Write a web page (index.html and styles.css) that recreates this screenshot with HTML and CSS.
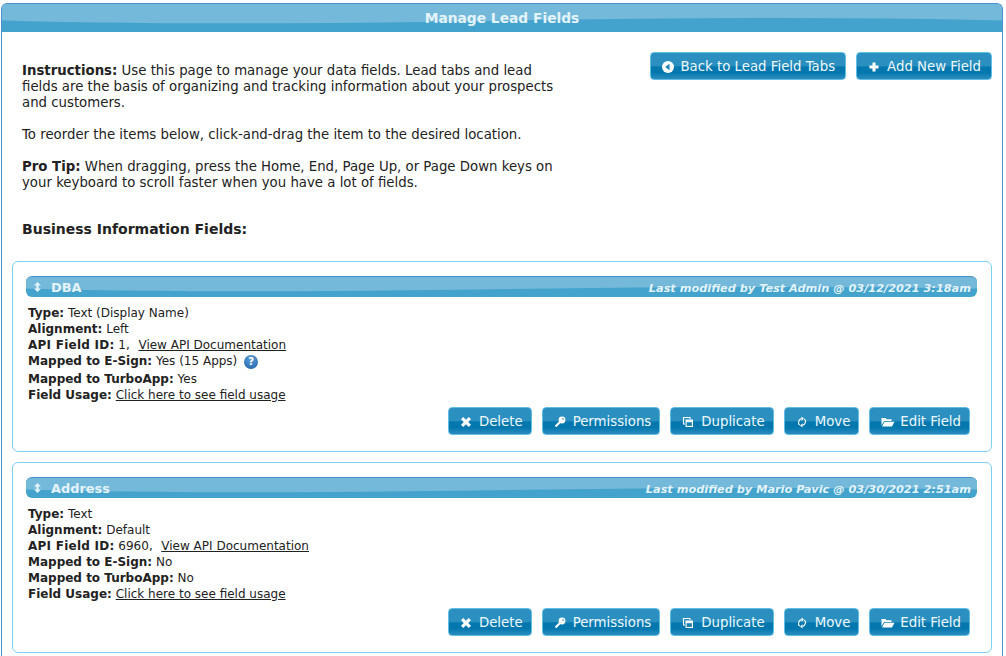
FILE: index.html
```html
<!DOCTYPE html>
<html lang="en">
<head>
<meta charset="utf-8">
<title>Manage Lead Fields</title>
<link rel="stylesheet" href="styles.css">
</head>
<body>
<svg class="defs" width="0" height="0" aria-hidden="true">
  <defs>
    <symbol id="i-x" viewBox="0 0 12 12"><path d="M1 3.200 3.200 1 6 3.800 8.800 1 11 3.200 8.200 6 11 8.800 8.800 11 6 8.200 3.200 11 1 8.800 3.800 6Z" fill="#fff"/></symbol>
    <symbol id="i-key" viewBox="0 0 12 12"><circle cx="8" cy="4" r="3.400" fill="#fff"/><path d="M6 6 1.500 10.500" stroke="#fff" stroke-width="2.200" fill="none"/><circle cx="9" cy="3" r=".8" fill="#1a80b4"/></symbol>
    <symbol id="i-dup" viewBox="0 0 12 12"><path d="M3 8H1.500V1.500H8V3" stroke="#fff" stroke-width="1.100" fill="none"/><path d="M3.500 3.500H11V11H3.500Z" fill="#fff"/><path d="M4.600 6.200h5.300v3.700H4.600Z" fill="#1a80b4"/></symbol>
    <symbol id="i-move" viewBox="0 0 12 12"><path d="M3.600 9.200A4 4 0 0 1 5.500 2.600M8.400 2.800A4 4 0 0 1 6.500 9.400" stroke="#fff" stroke-width="1.100" fill="none"/><path d="M5.500.4 8 2.600 5.500 4.800ZM6.500 7.200 4 9.400l2.500 2.200Z" fill="#fff"/></symbol>
    <symbol id="i-open" viewBox="0 1 14 10"><path d="M.5 2h4l1 1.200h5V5H3L.5 9.500Z" fill="#fff"/><path d="M3.500 5.800h10L11 10.500H1Z" fill="#fff"/></symbol>
    <symbol id="i-back" viewBox="0 0 12 12"><circle cx="6" cy="6" r="6" fill="#fff"/><path d="M7.500 2.800v6.400L3.200 6Z" fill="#1a80b4"/></symbol>
    <symbol id="i-plus" viewBox="0 0 12 12"><path d="M4.500 1.500h3v3h3v3h-3v3h-3v-3h-3v-3h3Z" fill="#fff"/></symbol>
    <symbol id="i-sort" viewBox="0 0 7 10"><path d="M3.500 0 7 3.500H4.600v3H7L3.500 10 0 6.500h2.400v-3H0Z" fill="#e3f3fa"/></symbol>
  </defs>
</svg>
<main class="frame">
  <header class="bar bar-main">
    <svg class="wave" viewBox="0 0 1000 29" preserveAspectRatio="none" aria-hidden="true"><path d="M0 17C100 20 250 21 400 19C600 15 800 12 1000 17V0H0Z" fill="#74b9d9"/></svg>
    <h1 class="bar-title">Manage Lead Fields</h1>
  </header>
  <section class="intro">
    <div class="intro-text">
      <p><b>Instructions:</b> Use this page to manage your data fields. Lead tabs and lead fields are the basis of organizing and tracking information about your prospects and customers.</p>
      <p>To reorder the items below, click-and-drag the item to the desired location.</p>
      <p><b>Pro Tip:</b> When dragging, press the Home, End, Page Up, or Page Down keys on your keyboard to scroll faster when you have a lot of fields.</p>
    </div>
    <div class="intro-actions">
      <a class="btn"><svg class="ic"><use href="#i-back"/></svg>Back to Lead Field Tabs</a>
      <a class="btn"><svg class="ic"><use href="#i-plus"/></svg>Add New Field</a>
    </div>
  </section>
  <h2 class="section-title">Business Information Fields:</h2>

  <article class="card">
    <div class="bar bar-card">
      <svg class="wave" viewBox="0 0 1000 21" preserveAspectRatio="none" aria-hidden="true"><path d="M0 12C100 15 250 16 400 14C600 11 800 9 1000 12V0H0Z" fill="#74b9d9"/></svg>
      <span class="card-name"><svg class="sort"><use href="#i-sort"/></svg>DBA</span>
      <span class="card-meta">Last modified by Test Admin @ 03/12/2021 3:18am</span>
    </div>
    <div class="props">
      <div><b>Type:</b> Text (Display Name)</div>
      <div><b>Alignment:</b> Left</div>
      <div class="prop-api"><b>API Field ID:</b> 1,&nbsp; <a href="#">View API Documentation</a></div>
      <div class="prop-help"><b>Mapped to E-Sign:</b> Yes (15 Apps) <span class="help">?</span></div>
      <div><b>Mapped to TurboApp:</b> Yes</div>
      <div><b>Field Usage:</b> <a href="#">Click here to see field usage</a></div>
    </div>
    <div class="actions">
      <a class="btn"><svg class="ic"><use href="#i-x"/></svg>Delete</a>
      <a class="btn"><svg class="ic"><use href="#i-key"/></svg>Permissions</a>
      <a class="btn"><svg class="ic"><use href="#i-dup"/></svg>Duplicate</a>
      <a class="btn"><svg class="ic"><use href="#i-move"/></svg>Move</a>
      <a class="btn"><svg class="ic ic-wide"><use href="#i-open"/></svg>Edit Field</a>
    </div>
  </article>

  <article class="card">
    <div class="bar bar-card">
      <svg class="wave" viewBox="0 0 1000 21" preserveAspectRatio="none" aria-hidden="true"><path d="M0 12C100 15 250 16 400 14C600 11 800 9 1000 12V0H0Z" fill="#74b9d9"/></svg>
      <span class="card-name"><svg class="sort"><use href="#i-sort"/></svg>Address</span>
      <span class="card-meta">Last modified by Mario Pavic @ 03/30/2021 2:51am</span>
    </div>
    <div class="props">
      <div><b>Type:</b> Text</div>
      <div><b>Alignment:</b> Default</div>
      <div class="prop-api"><b>API Field ID:</b> 6960,&nbsp; <a href="#">View API Documentation</a></div>
      <div><b>Mapped to E-Sign:</b> No</div>
      <div><b>Mapped to TurboApp:</b> No</div>
      <div><b>Field Usage:</b> <a href="#">Click here to see field usage</a></div>
    </div>
    <div class="actions">
      <a class="btn"><svg class="ic"><use href="#i-x"/></svg>Delete</a>
      <a class="btn"><svg class="ic"><use href="#i-key"/></svg>Permissions</a>
      <a class="btn"><svg class="ic"><use href="#i-dup"/></svg>Duplicate</a>
      <a class="btn"><svg class="ic"><use href="#i-move"/></svg>Move</a>
      <a class="btn"><svg class="ic ic-wide"><use href="#i-open"/></svg>Edit Field</a>
    </div>
  </article>
</main>
</body>
</html>
```
FILE: styles.css
```css
* { box-sizing: border-box; }
html, body { margin: 0; height: 656px; overflow: hidden; }
body {
  background: #fff;
  color: #222;
  font-family: "DejaVu Sans", Verdana, sans-serif;
  font-size: 12px;
  line-height: 16px;
  padding: 3px 3px 0 1px;
}
.defs { display: block; height: 0; }
.frame {
  height: 653px;
  overflow: hidden;
  border: 1px solid #4a90cf;
  border-bottom: 0;
  border-radius: 6px 6px 0 0;
  padding: 0 10px;
}
.bar {
  position: relative;
  display: flex;
  align-items: center;
  background: #43a3cd;
  overflow: hidden;
  color: #fff;
}
.wave { position: absolute; inset: 0; width: 100%; height: 100%; }
.bar-main {
  height: 28px;
  margin: 0 -10px;
  justify-content: center;
  border-radius: 5px 5px 0 0;
}
.bar-title {
  position: relative;
  margin: 0;
  font-size: 13.800px;
  font-weight: bold;
  color: #e3f3fa;
}
.intro {
  display: flex;
  justify-content: space-between;
  padding: 20px 0 0 10px;
  font-size: 13.300px;
}
.intro-text { width: 540px; padding-top: 11px; }
.intro-text p { margin: 0 0 16px; }
.intro-actions { display: flex; gap: 10px; align-items: flex-start; }
.intro-actions .btn { padding-right: 10px; }
.section-title {
  margin: 13px 0 23px 10px;
  font-size: 14px;
  line-height: 18px;
  font-weight: bold;
}
.btn {
  display: inline-flex;
  align-items: center;
  height: 28px;
  padding: 1px 8px 0 11px;
  border: 1px solid #62bde6;
  border-radius: 4px;
  background: linear-gradient(#2b90c0 0, #2b90c0 48%, #0478ae 54%, #0478ae 75%, #2b8cbc 100%);
  color: #eef8fc;
  font-size: 13.300px;
  line-height: 18px;
  white-space: nowrap;
  cursor: pointer;
}
.ic { width: 12px; height: 12px; margin-right: 7px; flex: none; }
.ic-wide { width: 14px; margin-right: 5px; }
.card {
  display: flex;
  flex-direction: column;
  height: 191px;
  margin: 0 0 10px;
  padding: 14px 14px 16px 13px;
  border: 1px solid #7ed1f3;
  border-radius: 6px;
}
.bar-card {
  height: 21px;
  flex: none;
  justify-content: space-between;
  padding: 1px 6px 0 8px;
  border-radius: 6px;
  border-top: 1px solid #4a90cf;
}
.card-name, .card-meta { position: relative; color: #e3f3fa; font-weight: bold; }
.card-name { display: flex; align-items: center; font-size: 12.900px; }
.card-meta { font-style: italic; font-size: 11.300px; top: 1px; }
.sort { width: 7px; height: 10px; margin-right: 10px; margin-top: -2px; }
.props { padding: 8px 0 0 2px; }
.props a { color: #222; text-decoration: underline; }
.prop-api b { letter-spacing: .25px; }
.prop-api a { margin-left: 1px; }
.prop-help { height: 18px; }
.help {
  display: inline-block;
  width: 14px;
  height: 14px;
  margin-left: 3px;
  border-radius: 50%;
  background: radial-gradient(circle at 50% 30%, #5b9fd8, #1e5fa8);
  color: #fff;
  font-size: 10px;
  font-weight: bold;
  line-height: 14px;
  text-align: center;
}
.actions {
  display: flex;
  justify-content: flex-end;
  gap: 10px;
  margin-top: auto;
  padding-right: 7px;
}
```
